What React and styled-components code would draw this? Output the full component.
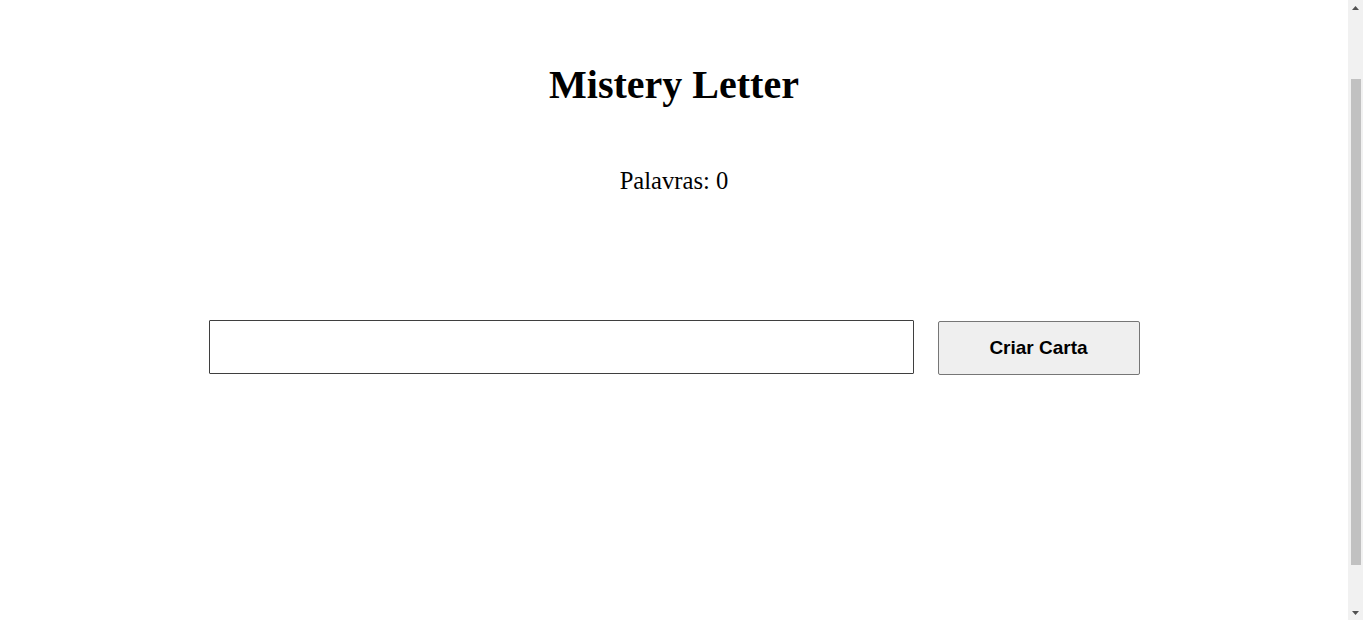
import React, { useEffect, useState } from "react";
import styled, { createGlobalStyle } from "styled-components";

const GlobalStyle = createGlobalStyle`
  html, body {
    margin: 0;
    padding: 0;
    background: #ffffff;
  }
  body {
    font-family: "Liberation Serif", "Times New Roman", serif;
    color: #000;
  }
`;

const Page = styled.main`
  box-sizing: border-box;
  min-height: 752px;
  margin-right: 15px;
  padding-top: 144px;
  display: flex;
  flex-direction: column;
  align-items: center;
`;

const Title = styled.h1`
  margin: 0;
  font-family: "Liberation Serif", "Times New Roman", serif;
  font-size: 40px;
  font-weight: 700;
  line-height: 46px;
`;

const Counter = styled.p`
  margin: 59px 0 0;
  font-family: "Liberation Serif", "Times New Roman", serif;
  font-size: 24.6px;
  line-height: 27px;
`;

const Row = styled.div`
  margin-top: 126px;
  display: flex;
  align-items: flex-start;
  gap: 24px;
`;

const LetterInput = styled.input`
  box-sizing: border-box;
  width: 705px;
  height: 54px;
  margin: 0;
  padding: 0 8px;
  border: 1px solid #3f3f3f;
  border-radius: 1px;
  background: #fff;
  font-family: "Liberation Sans", Arial, sans-serif;
  font-size: 16px;
  outline: none;
`;

const CreateButton = styled.button`
  box-sizing: border-box;
  width: 202px;
  height: 54px;
  margin-top: 1px;
  border: 1px solid #767676;
  border-radius: 2px;
  background: #efefef;
  color: #000;
  font-family: "Liberation Sans", Arial, sans-serif;
  font-size: 19px;
  font-weight: 700;
  cursor: pointer;
`;

/* Page scrollbar drawn over the right edge */
const ScrollBar = styled.div`
  position: fixed;
  top: 0;
  right: 0;
  width: 15px;
  height: 100vh;
  background: #f1f1f1;
  display: flex;
  flex-direction: column;
`;

const ScrollArrow = styled.div`
  height: 15px;
  flex: none;
  display: flex;
  align-items: center;
  justify-content: center;
`;

const ScrollTrack = styled.div`
  flex: 1;
  padding: 64px 2px 0 3px;
`;

const ScrollThumb = styled.div`
  height: 486px;
  background: #c1c1c1;
`;

const Arrow = ({ up }) => (
  <svg width="7" height="4" viewBox="0 0 7 4">
    <path d={up ? "M0 4 L3.5 0 L7 4 Z" : "M0 0 L3.5 4 L7 0 Z"} fill="#505050" />
  </svg>
);

export default function App() {
  const [text, setText] = useState("");
  useEffect(() => {
    window.scrollTo(0, 82);
  }, []);
  const words = text.trim() ? text.trim().split(/\s+/).length : 0;
  return (
    <>
      <GlobalStyle />
      <Page>
        <Title>Mistery Letter</Title>
        <Counter>Palavras: {words}</Counter>
        <Row>
          <LetterInput
            type="text"
            value={text}
            onChange={(e) => setText(e.target.value)}
          />
          <CreateButton type="button">Criar Carta</CreateButton>
        </Row>
      </Page>
      <ScrollBar>
        <ScrollArrow>
          <Arrow up />
        </ScrollArrow>
        <ScrollTrack>
          <ScrollThumb />
        </ScrollTrack>
        <ScrollArrow>
          <Arrow />
        </ScrollArrow>
      </ScrollBar>
    </>
  );
}
